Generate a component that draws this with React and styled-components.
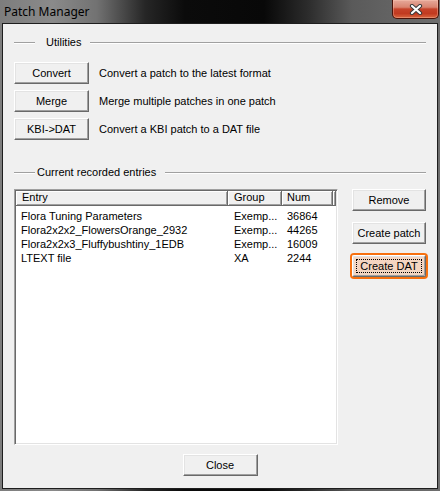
import React from 'react'
import styled, { createGlobalStyle } from 'styled-components'

const EstilosGlobales = createGlobalStyle`
    html, body {
        margin: 0;
        padding: 0;
        background: #ffffff;
    }
    body {
        font-family: "Liberation Sans", Arial, sans-serif;
        font-size: 11px;
        color: #000;
    }
`

export const Ventana = styled.div`
    width: 440px;
    height: 491px;
    box-sizing: border-box;
    display: flex;
    flex-direction: column;
    padding: 0 2px 2px 2px;
    background: linear-gradient(90deg, #7d7d7d 0%, #8a8a8a 12%, #727272 22%, #262626 33%, #0b0b0b 42%, #080808 60%, #2c2c2c 70%, #5a5a5a 80%, #6e6e6e 100%);
`
export const BarraTitulo = styled.div`
    height: 23px;
    display: flex;
    align-items: flex-start;
    justify-content: space-between;
    margin: 0 -2px 0 -2px;
    padding-left: 4px;
`
export const TextoTitulo = styled.span`
    font-family: "Noto Sans", "Open Sans", sans-serif;
    font-size: 12px;
    line-height: 24px;
    color: #000000;
`
export const BotonCerrarVentana = styled.div`
    width: 47px;
    height: 19px;
    margin-right: 1px;
    box-sizing: border-box;
    display: flex;
    align-items: center;
    justify-content: center;
    border: 1px solid #4a1208;
    border-top: none;
    border-radius: 0 0 5px 5px;
    background: linear-gradient(180deg, #e6a99a 0%, #d98470 40%, #c6432a 50%, #c13a20 75%, #d9663f 100%);
    box-shadow: inset 0 0 0 1px rgba(255, 210, 190, 0.35);
`
export const AreaCliente = styled.div`
    flex: 1;
    display: flex;
    flex-direction: column;
    background: #f0f0f0;
    border: 1px solid #1e1e1e;
    padding: 0 11px;
`
export const CabeceraGrupo = styled.div`
    display: flex;
    align-items: center;
    height: 13px;
    margin-top: ${p => p.$arriba}px;
`
export const LineaGrupo = styled.div`
    height: 0;
    border-top: 1px solid #a0a0a0;
    border-bottom: 1px solid #ffffff;
    width: ${p => p.$ancho ? p.$ancho + 'px' : 'auto'};
    flex: ${p => p.$ancho ? 'none' : '1'};
`
export const TituloGrupo = styled.span`
    padding: 0 ${p => p.$derecha}px 0 ${p => p.$izquierda}px;
    white-space: nowrap;
    line-height: 13px;
`
export const FilaUtilidad = styled.div`
    display: flex;
    align-items: center;
    gap: 10px;
    margin-top: ${p => p.$arriba}px;
`
export const Boton = styled.button`
    position: relative;
    width: ${p => p.$ancho}px;
    height: 22px;
    box-sizing: border-box;
    padding: 0;
    font-family: "Liberation Sans", Arial, sans-serif;
    font-size: 11px;
    color: #000;
    background: ${p => p.$enfocado ? '#f4d5c2' : '#f0f0f0'};
    border: 1px solid;
    border-color: #ffffff #696969 #696969 #ffffff;
    box-shadow: inset -1px -1px 0 #a0a0a0, inset 1px 1px 0 #e3e3e3${p => p.$enfocado ? ', 0 0 0 2px #f7700f' : ''};
    border-radius: ${p => p.$enfocado ? '2px' : '0'};
    ${p => p.$enfocado && `
        &::after {
            content: '';
            position: absolute;
            inset: 3px;
            border: 1px dotted #000;
        }
    `}
`
export const Descripcion = styled.span`
    white-space: nowrap;
`
export const ZonaEntradas = styled.div`
    display: flex;
    gap: 14px;
    margin-top: 10px;
`
export const Lista = styled.div`
    width: 324px;
    height: 256px;
    box-sizing: border-box;
    background: #ffffff;
    border: 1px solid;
    border-color: #a0a0a0 #ffffff #ffffff #a0a0a0;
    box-shadow: inset 1px 1px 0 #696969, inset -1px -1px 0 #e3e3e3;
    padding: 1px;
    display: flex;
    flex-direction: column;
`
export const CabeceraLista = styled.div`
    display: flex;
    height: 15px;
`
export const CeldaCabecera = styled.div`
    box-sizing: border-box;
    width: ${p => p.$ancho ? p.$ancho + 'px' : 'auto'};
    flex: ${p => p.$ancho ? 'none' : '1'};
    padding-left: ${p => p.$sangria}px;
    background: #f0f0f0;
    border-right: 1px solid #696969;
    border-bottom: 1px solid #696969;
    box-shadow: inset 1px 1px 0 #ffffff, inset -1px -1px 0 #a0a0a0;
    line-height: 13px;
`
export const CuerpoLista = styled.div`
    padding-top: 3px;
`
export const FilaLista = styled.div`
    display: flex;
    height: 14px;
    line-height: 14px;
`
export const CeldaLista = styled.div`
    box-sizing: border-box;
    width: ${p => p.$ancho}px;
    padding-left: ${p => p.$sangria}px;
    white-space: nowrap;
    overflow: hidden;
`
export const ColumnaBotones = styled.div`
    display: flex;
    flex-direction: column;
    gap: 11px;
`
export const PieVentana = styled.div`
    display: flex;
    justify-content: center;
    margin-top: 9px;
`

const columnas = [
    { titulo: 'Entry', ancho: 212, sangria: 6, celda: 5 },
    { titulo: 'Group', ancho: 54, sangria: 6, celda: 6 },
    { titulo: 'Num', ancho: 51, sangria: 5, celda: 5 },
]

const entradas = [
    ['Flora Tuning Parameters', 'Exemp...', '36864'],
    ['Flora2x2x2_FlowersOrange_2932', 'Exemp...', '44265'],
    ['Flora2x2x3_Fluffybushtiny_1EDB', 'Exemp...', '16009'],
    ['LTEXT file', 'XA', '2244'],
]

const utilidades = [
    { boton: 'Convert', texto: 'Convert a patch to the latest format' },
    { boton: 'Merge', texto: 'Merge multiple patches in one patch' },
    { boton: 'KBI->DAT', texto: 'Convert a KBI patch to a DAT file' },
]

export default function App() {
    return (
        <>
            <EstilosGlobales />
            <Ventana>
                <BarraTitulo>
                    <TextoTitulo>Patch Manager</TextoTitulo>
                    <BotonCerrarVentana>
                        <svg width="14" height="11" viewBox="0 0 14 11">
                            <path d="M3 2 L11 9 M11 2 L3 9" stroke="#3a3a3a" strokeWidth="4.2" strokeLinecap="round" />
                            <path d="M3 2 L11 9 M11 2 L3 9" stroke="#ffffff" strokeWidth="2.2" strokeLinecap="round" />
                        </svg>
                    </BotonCerrarVentana>
                </BarraTitulo>
                <AreaCliente>
                    <CabeceraGrupo $arriba={12}>
                        <LineaGrupo $ancho={21} />
                        <TituloGrupo $izquierda={11} $derecha={9}>Utilities</TituloGrupo>
                        <LineaGrupo />
                    </CabeceraGrupo>
                    {utilidades.map((u, i) => (
                        <FilaUtilidad key={u.boton} $arriba={i === 0 ? 13 : 6}>
                            <Boton $ancho={75}>{u.boton}</Boton>
                            <Descripcion>{u.texto}</Descripcion>
                        </FilaUtilidad>
                    ))}
                    <CabeceraGrupo $arriba={26}>
                        <LineaGrupo $ancho={21} />
                        <TituloGrupo $izquierda={2} $derecha={9}>Current recorded entries</TituloGrupo>
                        <LineaGrupo />
                    </CabeceraGrupo>
                    <ZonaEntradas>
                        <Lista>
                            <CabeceraLista>
                                {columnas.map(c => (
                                    <CeldaCabecera key={c.titulo} $ancho={c.ancho} $sangria={c.sangria}>{c.titulo}</CeldaCabecera>
                                ))}
                                <CeldaCabecera />
                            </CabeceraLista>
                            <CuerpoLista>
                                {entradas.map(fila => (
                                    <FilaLista key={fila[0]}>
                                        {fila.map((valor, i) => (
                                            <CeldaLista key={i} $ancho={columnas[i].ancho} $sangria={columnas[i].celda}>{valor}</CeldaLista>
                                        ))}
                                    </FilaLista>
                                ))}
                            </CuerpoLista>
                        </Lista>
                        <ColumnaBotones>
                            <Boton $ancho={74}>Remove</Boton>
                            <Boton $ancho={74}>Create patch</Boton>
                            <Boton $ancho={74} $enfocado>Create DAT</Boton>
                        </ColumnaBotones>
                    </ZonaEntradas>
                    <PieVentana>
                        <Boton $ancho={75}>Close</Boton>
                    </PieVentana>
                </AreaCliente>
            </Ventana>
        </>
    )
}
